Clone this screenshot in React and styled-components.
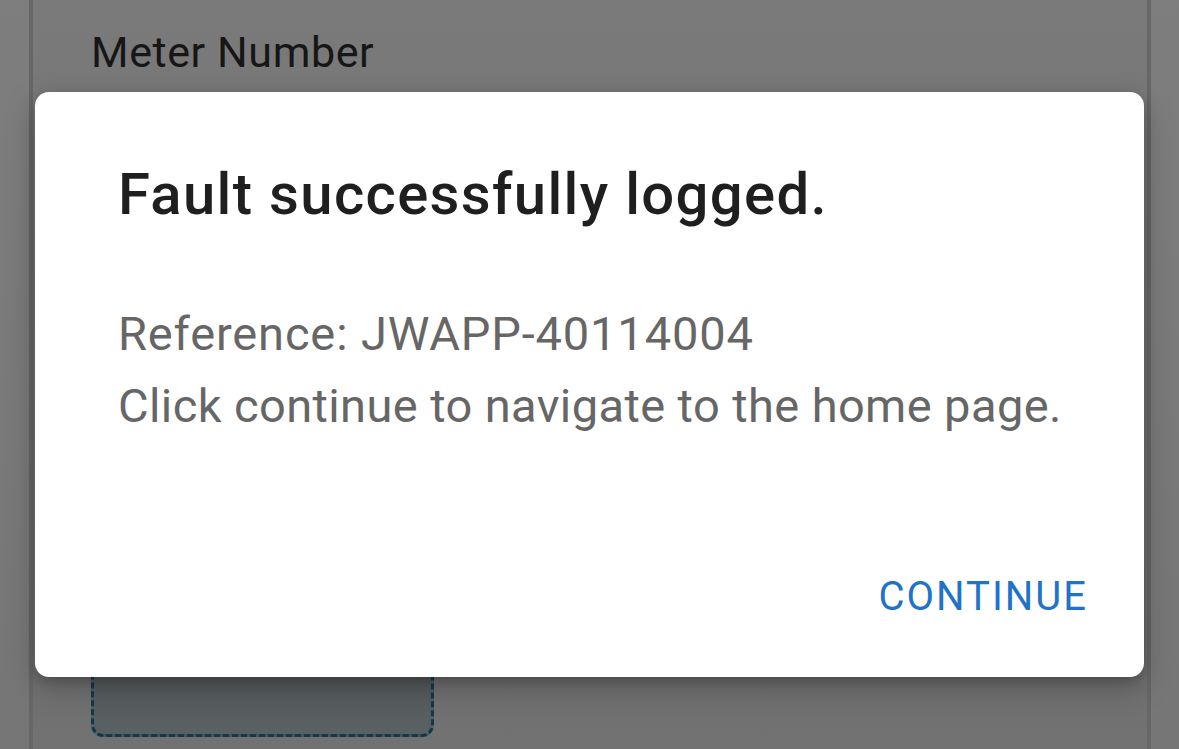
import React from "react";
import styled, { createGlobalStyle } from "styled-components";

const Global = createGlobalStyle`
  html, body { margin: 0; padding: 0; }
  body { font-family: Roboto, "Noto Sans", Arial, sans-serif; background: #7a7a7a; }
`;

const Page = styled.div`
  position: relative;
  display: flex;
  width: 1179px;
  height: 749px;
  overflow: hidden;
  background: #7b7b7b;
`;

const SideStrip = styled.div`
  width: ${(p) => p.$w}px;
  flex: none;
  background: linear-gradient(180deg, #7e7e7e, #767676);
`;

const Rule = styled.div`
  width: 4px;
  flex: none;
  background: #676767;
`;

const Main = styled.main`
  flex: 1;
  display: flex;
  flex-direction: column;
  padding: 26px 0 12px 58px;
  background: linear-gradient(180deg, #7a7a7a 0%, #6f6f6f 85%, #727272 100%);
`;

const Label = styled.div`
  font-size: 43px;
  line-height: 52px;
  color: #161616;
  letter-spacing: 0.6px;
`;

const UploadBox = styled.div`
  margin-top: auto;
  width: 343px;
  height: 170px;
  box-sizing: border-box;
  border: 3px dashed #0f3a4e;
  border-radius: 12px;
  background: linear-gradient(180deg, #4b4f51, #5a6162);
`;

const Dialog = styled.div`
  position: absolute;
  left: 35px;
  top: 92px;
  width: 1109px;
  height: 585px;
  box-sizing: border-box;
  background: #ffffff;
  border-radius: 14px;
  box-shadow: 0 10px 30px rgba(0, 0, 0, 0.25), 0 4px 10px rgba(0, 0, 0, 0.15);
  display: flex;
  flex-direction: column;
  padding: 68px 58px 56px 83px;
`;

const Title = styled.h2`
  margin: 0;
  font-size: 58px;
  line-height: 68px;
  font-weight: 500;
  color: #1f1f1f;
  letter-spacing: 1.35px;
`;

const Body = styled.div`
  margin-top: 70px;
  font-size: 47px;
  line-height: 72px;
  color: #666666;
  letter-spacing: 0.4px;
`;

const RefLine = styled.div`
  letter-spacing: 0.85px;
`;

const Actions = styled.div`
  margin-top: auto;
  display: flex;
  justify-content: flex-end;
`;

const TextButton = styled.button`
  border: none;
  background: none;
  padding: 0;
  font-family: inherit;
  font-size: 40px;
  line-height: 48px;
  color: #1f73c9;
  letter-spacing: 2px;
  margin-right: -2px;
  cursor: pointer;
`;

export default function App() {
  return (
    <>
      <Global />
      <Page>
        <SideStrip $w={29} />
        <Rule />
        <Main>
          <Label>Meter Number</Label>
          <UploadBox />
        </Main>
        <Rule />
        <SideStrip $w={28} />
        <Dialog role="dialog">
          <Title>Fault successfully logged.</Title>
          <Body>
            <RefLine>Reference: JWAPP-40114004</RefLine>
            <div>Click continue to navigate to the home page.</div>
          </Body>
          <Actions>
            <TextButton>CONTINUE</TextButton>
          </Actions>
        </Dialog>
      </Page>
    </>
  );
}
